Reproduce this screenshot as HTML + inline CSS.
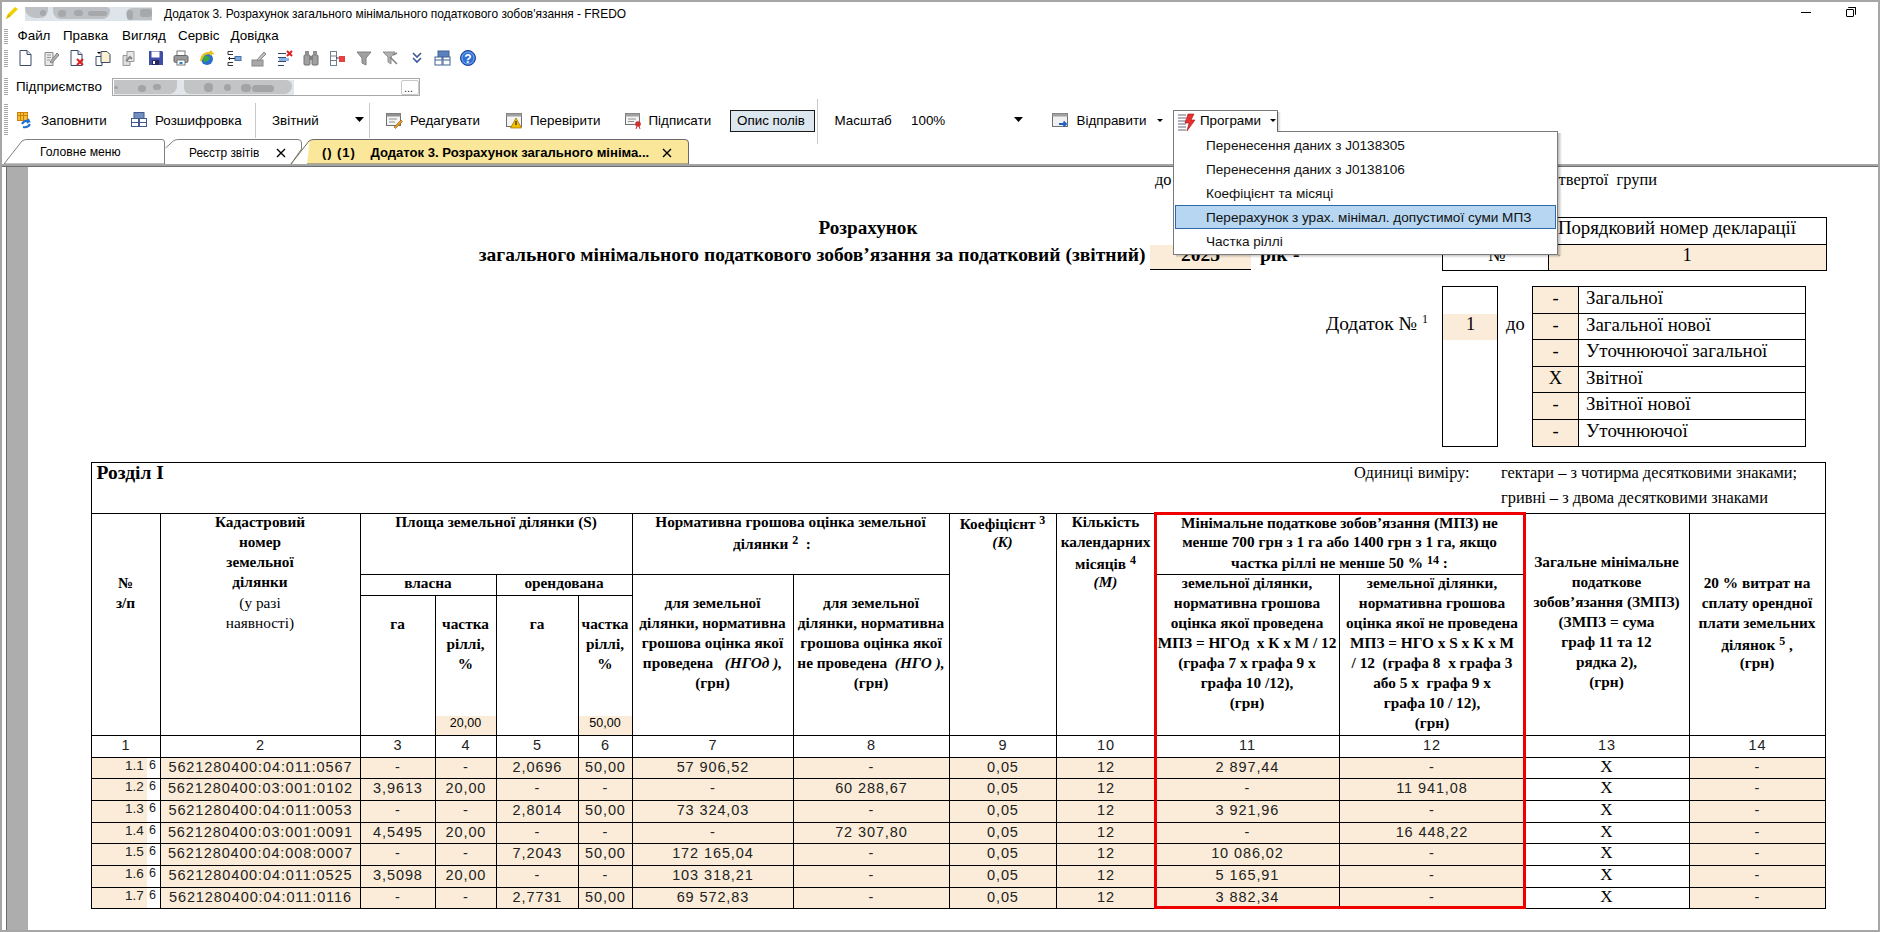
<!DOCTYPE html><html><head><meta charset="utf-8"><style>
html,body{margin:0;padding:0;}
body{width:1880px;height:932px;position:relative;overflow:hidden;background:#fff;}
.t{position:absolute;white-space:pre;line-height:normal;}
.r{position:absolute;}
svg{position:absolute;}
</style></head><body>
<svg style="left:4px;top:5px" width="16" height="16" viewBox="0 0 16 16"><path d="M2 14 L4 9 L11 2 L14 4 L7 11 Z" fill="#f2d000"/><path d="M2 14 L4 9 L7 11 Z" fill="#d8b800"/></svg><div class="r" style="left:25px;top:7px;width:127px;height:14px;background:#dde4ea;"></div><div class="r" style="left:25px;top:7px;width:23px;height:11px;background:#bdc1c5;border-radius:0 0 8px 10px;filter:blur(0.6px);"></div><div class="r" style="left:53px;top:7px;width:57px;height:12px;background:#bdc1c5;border-radius:0 4px 8px 8px;filter:blur(0.6px);"></div><div class="r" style="left:126px;top:8px;width:26px;height:12px;background:#bdc1c5;border-radius:6px 0 0 6px;filter:blur(0.6px);"></div><div class="r" style="left:40px;top:10px;width:6px;height:6px;background:#a6a8aa;border-radius:3px;filter:blur(0.5px);"></div><div class="r" style="left:58px;top:10px;width:8px;height:7px;background:#a6a8aa;border-radius:3px;filter:blur(0.5px);"></div><div class="r" style="left:74px;top:10px;width:9px;height:6px;background:#a6a8aa;border-radius:3px;filter:blur(0.5px);"></div><div class="r" style="left:88px;top:11px;width:19px;height:5px;background:#a6a8aa;border-radius:3px;filter:blur(0.5px);"></div><div class="r" style="left:127px;top:10px;width:6px;height:10px;background:#a6a8aa;border-radius:3px;filter:blur(0.5px);"></div><div class="r" style="left:140px;top:9px;width:12px;height:8px;background:#a6a8aa;border-radius:3px;filter:blur(0.5px);"></div><div class="t" style="left:164px;top:7.19px;font-family:'Liberation Sans';font-size:11.95px;font-weight:normal;font-style:normal;color:#000;">Додаток 3. Розрахунок загального мінімального податкового зобов&#x27;язання - FREDO</div><div class="r" style="left:1801px;top:12px;width:10px;height:1px;background:#000;"></div><div class="r" style="left:1846px;top:9px;width:8px;height:8px;border:1.5px solid #000;box-sizing:border-box;border-radius:1px;"></div><div class="r" style="left:1848px;top:7px;width:8px;height:8px;border-top:1.5px solid #000;border-right:1.5px solid #000;box-sizing:border-box;border-radius:1px;"></div><div class="r" style="left:4px;top:29px;width:4px;height:1px;background:#a8a8a8;"></div><div class="r" style="left:4px;top:31px;width:4px;height:1px;background:#a8a8a8;"></div><div class="r" style="left:4px;top:33px;width:4px;height:1px;background:#a8a8a8;"></div><div class="r" style="left:4px;top:35px;width:4px;height:1px;background:#a8a8a8;"></div><div class="r" style="left:4px;top:37px;width:4px;height:1px;background:#a8a8a8;"></div><div class="r" style="left:4px;top:39px;width:4px;height:1px;background:#a8a8a8;"></div><div class="r" style="left:4px;top:41px;width:4px;height:1px;background:#a8a8a8;"></div><div class="r" style="left:4px;top:43px;width:4px;height:1px;background:#a8a8a8;"></div><div class="t" style="left:17.5px;top:27.87px;font-family:'Liberation Sans';font-size:13.4px;font-weight:normal;font-style:normal;color:#000;">Файл</div><div class="t" style="left:63px;top:27.87px;font-family:'Liberation Sans';font-size:13.4px;font-weight:normal;font-style:normal;color:#000;">Правка</div><div class="t" style="left:122px;top:27.87px;font-family:'Liberation Sans';font-size:13.4px;font-weight:normal;font-style:normal;color:#000;">Вигляд</div><div class="t" style="left:178px;top:27.87px;font-family:'Liberation Sans';font-size:13.4px;font-weight:normal;font-style:normal;color:#000;">Сервіс</div><div class="t" style="left:230.5px;top:27.87px;font-family:'Liberation Sans';font-size:13.4px;font-weight:normal;font-style:normal;color:#000;">Довідка</div><div class="r" style="left:4px;top:50px;width:4px;height:1px;background:#a8a8a8;"></div><div class="r" style="left:4px;top:52px;width:4px;height:1px;background:#a8a8a8;"></div><div class="r" style="left:4px;top:54px;width:4px;height:1px;background:#a8a8a8;"></div><div class="r" style="left:4px;top:56px;width:4px;height:1px;background:#a8a8a8;"></div><div class="r" style="left:4px;top:58px;width:4px;height:1px;background:#a8a8a8;"></div><div class="r" style="left:4px;top:60px;width:4px;height:1px;background:#a8a8a8;"></div><div class="r" style="left:4px;top:62px;width:4px;height:1px;background:#a8a8a8;"></div><div class="r" style="left:4px;top:64px;width:4px;height:1px;background:#a8a8a8;"></div><div class="r" style="left:4px;top:66px;width:4px;height:1px;background:#a8a8a8;"></div><svg style="left:17px;top:49px" width="18" height="18" viewBox="0 0 18 18"><path d="M3 1.5 H10 L14 5.5 V16.5 H3 Z" fill="#fff" stroke="#3a4a6a" stroke-width="1"/><path d="M10 1.5 V5.5 H14" fill="#dde" stroke="#3a4a6a"/></svg><svg style="left:42px;top:49px" width="18" height="18" viewBox="0 0 18 18"><path d="M3 3.5 H11 V16.5 H3 Z" fill="#e8e8e8" stroke="#8a8a8a"/><path d="M5 6 H9 M5 8.5 H9 M5 11 H8" stroke="#999"/><path d="M8 13 L15 4 L17 6 L10 14 Z" fill="#b0b0b0" stroke="#808080"/></svg><svg style="left:68px;top:49px" width="18" height="18" viewBox="0 0 18 18"><path d="M3 1.5 H10 L14 5.5 V16.5 H3 Z" fill="#fff" stroke="#3a4a6a" stroke-width="1"/><path d="M10 1.5 V5.5 H14" fill="#dde" stroke="#3a4a6a"/><path d="M9 10 L15 16 M15 10 L9 16" stroke="#e02020" stroke-width="2"/></svg><svg style="left:94px;top:49px" width="18" height="18" viewBox="0 0 18 18"><path d="M2 7.5 H8 V16.5 H2 Z" fill="#fff" stroke="#3a4a6a"/><path d="M7 2.5 H13 L16 5.5 V13.5 H7 Z" fill="#fbf0d0" stroke="#3a4a6a"/><path d="M3 3 L5 5 L7 3Z" fill="#000"/></svg><svg style="left:120px;top:49px" width="18" height="18" viewBox="0 0 18 18"><path d="M3 6.5 H10 V16.5 H3 Z" fill="#ddd" stroke="#999"/><path d="M7 2.5 H14 V12.5 H7 Z" fill="#e8e8e8" stroke="#999"/><path d="M6 12 L10 8 L12 10" stroke="#888" stroke-width="2" fill="none"/></svg><svg style="left:147px;top:49px" width="18" height="18" viewBox="0 0 18 18"><path d="M2 2 H15 L16 3 V16 H2 Z" fill="#3f4fa8"/><rect x="4.5" y="2.5" width="8" height="6" fill="#fff"/><rect x="5" y="11" width="7" height="5" fill="#2a2a60"/><rect x="6" y="12" width="2" height="3" fill="#fff"/></svg><svg style="left:172px;top:49px" width="18" height="18" viewBox="0 0 18 18"><rect x="5" y="2" width="8" height="5" fill="#fff" stroke="#777"/><rect x="2" y="6.5" width="14" height="7" rx="1.5" fill="#9a9a9a" stroke="#666"/><rect x="5" y="11" width="8" height="5" fill="#fff" stroke="#777"/><rect x="7.5" y="13" width="3" height="2" fill="#1e80d0"/></svg><svg style="left:198px;top:49px" width="18" height="18" viewBox="0 0 18 18"><circle cx="9" cy="10" r="6" fill="#2a6fd0"/><path d="M5 8 Q9 5 12 9 Q10 13 6 13Z" fill="#3aaa40"/><path d="M3 12 Q4 3 14 4 L12 2 M14 4 L12 6" stroke="#e8c020" stroke-width="2.2" fill="none"/></svg><svg style="left:224px;top:49px" width="18" height="18" viewBox="0 0 18 18"><path d="M9 2.5 H4 V5.5 H9 M9 13.5 H4 V16.5 H9" stroke="#333" fill="none"/><rect x="11" y="7.5" width="6" height="4" fill="#7aa8e0" stroke="#4a70a0"/><path d="M5 9.5 H11 M6 8 L4.5 9.5 L6 11" stroke="#222" fill="none"/></svg><svg style="left:250px;top:49px" width="18" height="18" viewBox="0 0 18 18"><rect x="2" y="11" width="11" height="6" fill="#a8a8a8" stroke="#888"/><path d="M7 11 L14 3 L16 5 L9 12 Z" fill="#c0c0c0" stroke="#888"/></svg><svg style="left:276px;top:49px" width="18" height="18" viewBox="0 0 18 18"><path d="M2 4.5 H10 M2 8.5 H10 M2 12.5 H10 M2 16.5 H8" stroke="#34486a" fill="none"/><rect x="3" y="9" width="10" height="3" fill="#8ab4e8"/><path d="M11 2 L16 7 M16 2 L11 7" stroke="#e02020" stroke-width="2"/></svg><svg style="left:302px;top:49px" width="18" height="18" viewBox="0 0 18 18"><rect x="2" y="6" width="6" height="10" rx="1" fill="#a0a0a0" stroke="#707070"/><rect x="10" y="6" width="6" height="10" rx="1" fill="#a0a0a0" stroke="#707070"/><rect x="3" y="2" width="4" height="5" fill="#909090"/><rect x="11" y="2" width="4" height="5" fill="#909090"/><rect x="7" y="7" width="4" height="4" fill="#808080"/></svg><svg style="left:328px;top:49px" width="18" height="18" viewBox="0 0 18 18"><rect x="2.5" y="2.5" width="6" height="14" fill="#fff" stroke="#708090"/><path d="M2.5 7 H8.5 M2.5 11.5 H8.5" stroke="#708090"/><rect x="11" y="7" width="6" height="6" fill="#e84040"/><path d="M8 9 L11 9" stroke="#335" /></svg><svg style="left:355px;top:49px" width="18" height="18" viewBox="0 0 18 18"><path d="M2 3 H16 L11 9 V16 L7 14 V9 Z" fill="#a0a0a0" stroke="#808080"/></svg><svg style="left:381px;top:49px" width="18" height="18" viewBox="0 0 18 18"><path d="M2 3 H14 L10 8 V15 L7 13 V8 Z" fill="#b0b0b0" stroke="#909090"/><path d="M9 8 L16 15 M12 6 L16 4" stroke="#808080" stroke-width="1.5"/></svg><svg style="left:408px;top:49px" width="18" height="18" viewBox="0 0 18 18"><path d="M5 4 L9 8 L13 4 M5 9 L9 13 L13 9" stroke="#3a5a9a" stroke-width="1.6" fill="none"/></svg><svg style="left:433px;top:49px" width="18" height="18" viewBox="0 0 18 18"><rect x="5" y="2" width="11" height="7" fill="#5a80c0" stroke="#406090"/><rect x="2" y="8" width="7" height="8" fill="#fff" stroke="#406090"/><rect x="10" y="8" width="7" height="8" fill="#fff" stroke="#406090"/><path d="M2 11 H9 M10 11 H17" stroke="#406090"/></svg><svg style="left:459px;top:49px" width="18" height="18" viewBox="0 0 18 18"><circle cx="9" cy="9" r="7.5" fill="#2f6fd8" stroke="#1a3f90"/><circle cx="9" cy="9" r="6" fill="none" stroke="#8ab8f0" stroke-width="0.8"/><text x="9" y="13.5" font-family="Liberation Sans" font-size="12" font-weight="bold" fill="#fff" text-anchor="middle">?</text></svg><div class="r" style="left:4px;top:78px;width:4px;height:1px;background:#a8a8a8;"></div><div class="r" style="left:4px;top:80px;width:4px;height:1px;background:#a8a8a8;"></div><div class="r" style="left:4px;top:82px;width:4px;height:1px;background:#a8a8a8;"></div><div class="r" style="left:4px;top:84px;width:4px;height:1px;background:#a8a8a8;"></div><div class="r" style="left:4px;top:86px;width:4px;height:1px;background:#a8a8a8;"></div><div class="r" style="left:4px;top:88px;width:4px;height:1px;background:#a8a8a8;"></div><div class="r" style="left:4px;top:90px;width:4px;height:1px;background:#a8a8a8;"></div><div class="r" style="left:4px;top:92px;width:4px;height:1px;background:#a8a8a8;"></div><div class="r" style="left:4px;top:94px;width:4px;height:1px;background:#a8a8a8;"></div><div class="t" style="left:16px;top:78.87px;font-family:'Liberation Sans';font-size:13.4px;font-weight:normal;font-style:normal;color:#000;">Підприємство</div><div class="r" style="left:112px;top:78px;width:308px;height:18px;background:#fff;border:1px solid #a8a8a8;box-sizing:border-box;"></div><div class="r" style="left:114px;top:80px;width:180px;height:15px;background:#e2e6ea;"></div><div class="r" style="left:114px;top:80px;width:63px;height:14px;background:#c2c4c6;border-radius:0 0 8px 0;filter:blur(0.6px);"></div><div class="r" style="left:184px;top:80px;width:108px;height:14px;background:#c2c4c6;border-radius:0 6px 8px 6px;filter:blur(0.6px);"></div><div class="r" style="left:114px;top:86px;width:4px;height:3px;background:#a2a4a6;border-radius:4px;filter:blur(0.5px);"></div><div class="r" style="left:138px;top:85px;width:8px;height:7px;background:#a2a4a6;border-radius:4px;filter:blur(0.5px);"></div><div class="r" style="left:153px;top:84px;width:8px;height:6px;background:#a2a4a6;border-radius:4px;filter:blur(0.5px);"></div><div class="r" style="left:204px;top:83px;width:9px;height:9px;background:#a2a4a6;border-radius:4px;filter:blur(0.5px);"></div><div class="r" style="left:224px;top:84px;width:7px;height:7px;background:#a2a4a6;border-radius:4px;filter:blur(0.5px);"></div><div class="r" style="left:241px;top:84px;width:10px;height:8px;background:#a2a4a6;border-radius:4px;filter:blur(0.5px);"></div><div class="r" style="left:252px;top:85px;width:22px;height:7px;background:#a2a4a6;border-radius:4px;filter:blur(0.5px);"></div><div class="r" style="left:401px;top:80px;width:18px;height:15px;border:1px solid #c8c8c8;box-sizing:border-box;border-radius:2px;"></div><div class="t" style="left:404px;top:82.05px;font-family:'Liberation Sans';font-size:11px;font-weight:normal;font-style:normal;color:#222;">...</div><div class="r" style="left:4px;top:104px;width:4px;height:1px;background:#a8a8a8;"></div><div class="r" style="left:4px;top:106px;width:4px;height:1px;background:#a8a8a8;"></div><div class="r" style="left:4px;top:108px;width:4px;height:1px;background:#a8a8a8;"></div><div class="r" style="left:4px;top:110px;width:4px;height:1px;background:#a8a8a8;"></div><div class="r" style="left:4px;top:112px;width:4px;height:1px;background:#a8a8a8;"></div><div class="r" style="left:4px;top:114px;width:4px;height:1px;background:#a8a8a8;"></div><div class="r" style="left:4px;top:116px;width:4px;height:1px;background:#a8a8a8;"></div><div class="r" style="left:4px;top:118px;width:4px;height:1px;background:#a8a8a8;"></div><div class="r" style="left:4px;top:120px;width:4px;height:1px;background:#a8a8a8;"></div><div class="r" style="left:4px;top:122px;width:4px;height:1px;background:#a8a8a8;"></div><div class="r" style="left:4px;top:124px;width:4px;height:1px;background:#a8a8a8;"></div><div class="r" style="left:4px;top:126px;width:4px;height:1px;background:#a8a8a8;"></div><div class="r" style="left:4px;top:128px;width:4px;height:1px;background:#a8a8a8;"></div><div class="r" style="left:4px;top:130px;width:4px;height:1px;background:#a8a8a8;"></div><div class="r" style="left:4px;top:132px;width:4px;height:1px;background:#a8a8a8;"></div><div class="r" style="left:4px;top:134px;width:4px;height:1px;background:#a8a8a8;"></div><div class="r" style="left:255px;top:103px;width:1px;height:35px;background:#c8c8c8;"></div><div class="r" style="left:369px;top:103px;width:1px;height:35px;background:#c8c8c8;"></div><div class="r" style="left:817px;top:99px;width:1px;height:45px;background:#c8c8c8;"></div><svg style="left:16px;top:111px" width="18" height="18" viewBox="0 0 18 18"><rect x="1.5" y="1.5" width="10" height="8" fill="#f0c040" stroke="#d08000"/><path d="M1.5 4.5 H11.5 M4.5 1.5 V9.5 M7.5 1.5 V9.5" stroke="#d08000"/><path d="M6 13 Q8 9 13 10 L12 8 M13 10 L11 12" stroke="#2070d0" stroke-width="2" fill="none"/><path d="M14 13 Q12 17 7 16" stroke="#2070d0" stroke-width="2" fill="none"/></svg><div class="t" style="left:41px;top:113.37px;font-family:'Liberation Sans';font-size:13.4px;font-weight:normal;font-style:normal;color:#000;">Заповнити</div><svg style="left:130px;top:111px" width="18" height="18" viewBox="0 0 18 18"><rect x="4" y="1.5" width="10" height="6" fill="#7090c0" stroke="#405a90"/><rect x="1.5" y="7.5" width="7" height="8" fill="#fff" stroke="#405a90"/><rect x="9.5" y="7.5" width="7" height="8" fill="#fff" stroke="#405a90"/><path d="M1.5 11.5 H8.5 M9.5 11.5 H16.5" stroke="#405a90"/></svg><div class="t" style="left:155px;top:113.37px;font-family:'Liberation Sans';font-size:13.4px;font-weight:normal;font-style:normal;color:#000;">Розшифровка</div><div class="t" style="left:272px;top:113.37px;font-family:'Liberation Sans';font-size:13.4px;font-weight:normal;font-style:normal;color:#000;">Звітний</div><svg style="left:355px;top:117px" width="9" height="6"><path d="M0 0 H9 L4.5 5 Z" fill="#000"/></svg><svg style="left:385px;top:111px" width="18" height="18" viewBox="0 0 18 18"><rect x="1.5" y="2.5" width="14" height="12" fill="#f4f4f4" stroke="#707070"/><rect x="1.5" y="2.5" width="14" height="3" fill="#909090"/><path d="M4 8 H12 M4 11 H10" stroke="#909090"/><path d="M9 16 L16 9 L17.5 10.5 L10.5 17.5 Z" fill="#e0a020" stroke="#905010" stroke-width="0.6"/></svg><div class="t" style="left:410px;top:113.37px;font-family:'Liberation Sans';font-size:13.4px;font-weight:normal;font-style:normal;color:#000;">Редагувати</div><svg style="left:505px;top:111px" width="18" height="18" viewBox="0 0 18 18"><rect x="1.5" y="2.5" width="15" height="13" fill="#f4f4f4" stroke="#707070"/><rect x="1.5" y="2.5" width="15" height="3" fill="#a0a0a0"/><path d="M11 7 L16.5 17 H5.5 Z" fill="#f0c000" stroke="#a07000" stroke-width="0.7"/><path d="M11 10 V14" stroke="#000"/></svg><div class="t" style="left:530px;top:113.37px;font-family:'Liberation Sans';font-size:13.4px;font-weight:normal;font-style:normal;color:#000;">Перевірити</div><svg style="left:624px;top:111px" width="18" height="18" viewBox="0 0 18 18"><rect x="1.5" y="2.5" width="14" height="11" fill="#f4f4f4" stroke="#707070"/><rect x="1.5" y="2.5" width="14" height="3" fill="#a0a0a0"/><path d="M4 8 H12 M4 10.5 H10" stroke="#909090"/><circle cx="14" cy="13" r="2.8" fill="#d03030"/><path d="M13 15 L12 18 M15 15 L16 18" stroke="#d03030"/></svg><div class="t" style="left:648.5px;top:113.37px;font-family:'Liberation Sans';font-size:13.4px;font-weight:normal;font-style:normal;color:#000;">Підписати</div><div class="r" style="left:730px;top:110px;width:85px;height:22px;background:#dce6ee;border:1px solid #1a1a1a;box-sizing:border-box;"></div><div class="t" style="left:737px;top:113.37px;font-family:'Liberation Sans';font-size:13.4px;font-weight:normal;font-style:normal;color:#000;">Опис полів</div><div class="t" style="left:834.5px;top:113.37px;font-family:'Liberation Sans';font-size:13.4px;font-weight:normal;font-style:normal;color:#000;">Масштаб</div><div class="t" style="left:911px;top:113.37px;font-family:'Liberation Sans';font-size:13.4px;font-weight:normal;font-style:normal;color:#000;">100%</div><svg style="left:1014px;top:117px" width="9" height="6"><path d="M0 0 H9 L4.5 5 Z" fill="#000"/></svg><svg style="left:1051px;top:111px" width="18" height="18" viewBox="0 0 18 18"><rect x="1.5" y="2.5" width="15" height="13" fill="#f0f0f0" stroke="#707070"/><rect x="1.5" y="2.5" width="15" height="3" fill="#a0a0a0"/><path d="M8 13 H15 M12.5 10.5 L15 13 L12.5 15.5" stroke="#2060c0" stroke-width="1.8" fill="none"/></svg><div class="t" style="left:1076.5px;top:113.37px;font-family:'Liberation Sans';font-size:13.4px;font-weight:normal;font-style:normal;color:#000;">Відправити</div><svg style="left:1157px;top:119px" width="6" height="4"><path d="M0 0 H6 L3 3 Z" fill="#000"/></svg><svg style="left:0;top:136px" width="700" height="32" viewBox="0 0 700 32">
<path d="M4 28 L22 5 Q24 3.5 27 3.5 H162 Q164.5 3.5 164.5 6 V28 Z" fill="#fff" stroke="#808080" stroke-width="1"/>
<path d="M165.5 12 L174 4.5 Q176 3.5 179 3.5 H298 Q301.5 3.5 301.5 7 V13 L291 28" fill="#fff" stroke="#808080" stroke-width="1"/>
<path d="M291 28 L309 5 Q311 3.5 314 3.5 H685 Q688.5 3.5 688.5 7 V28 Z" fill="#fbe799" stroke="#6a6a6a" stroke-width="1"/>
<path d="M292 28 L309.5 5.5 L307 28 Z" fill="#fff"/>
</svg><div class="t" style="left:40px;top:145.46px;font-family:'Liberation Sans';font-size:12.2px;font-weight:normal;font-style:normal;color:#000;">Головне меню</div><div class="t" style="left:189px;top:145.73px;font-family:'Liberation Sans';font-size:11.9px;font-weight:normal;font-style:normal;color:#000;">Реєстр звітів</div><svg style="left:276px;top:148px" width="10" height="10"><path d="M1 1 L9 9 M9 1 L1 9" stroke="#000" stroke-width="1.4"/></svg><div class="t" style="left:322px;top:145.14px;font-family:'Liberation Sans';font-size:13.1px;font-weight:bold;font-style:normal;color:#000;letter-spacing:0.9px;">() (1)</div><div class="t" style="left:370.4px;top:145.14px;font-family:'Liberation Sans';font-size:13.1px;font-weight:bold;font-style:normal;color:#000;">Додаток 3. Розрахунок загального мініма...</div><svg style="left:662px;top:148px" width="10" height="10"><path d="M1 1 L9 9 M9 1 L1 9" stroke="#000" stroke-width="1.4"/></svg><div class="r" style="left:0px;top:164px;width:1878px;height:2px;background:#a4a4a4;"></div><div class="r" style="left:0px;top:166px;width:1878px;height:1px;background:#6e6e6e;"></div><div class="r" style="left:6px;top:167px;width:1px;height:763px;background:#6e6e6e;"></div><div class="r" style="left:7px;top:167px;width:21px;height:763px;background:#adadad;"></div><div class="t" style="left:1155px;top:169.89px;font-family:'Liberation Serif';font-size:16.4px;font-weight:normal;font-style:normal;color:#000;">до податкової декларації платника єдиного податку</div><div class="t" style="left:857px;width:800px;text-align:right;top:169.89px;font-family:'Liberation Serif';font-size:16.4px;font-weight:normal;font-style:normal;color:#000;">твертої  групи</div><div class="t" style="left:568.0px;width:600px;text-align:center;top:217.39px;font-family:'Liberation Serif';font-size:19.2px;font-weight:bold;font-style:normal;color:#000;">Розрахунок</div><div class="t" style="left:245.5px;width:900px;text-align:right;top:243.63px;font-family:'Liberation Serif';font-size:19.5px;font-weight:bold;font-style:normal;color:#000;">загального мінімального податкового зобов’язання за податковий (звітний)</div><div class="r" style="left:1150px;top:245px;width:101px;height:25px;background:#faecd8;"></div><div class="r" style="left:1150px;top:269px;width:101px;height:1px;background:#000;"></div><div class="t" style="left:900.5px;width:600px;text-align:center;top:243.63px;font-family:'Liberation Serif';font-size:19.5px;font-weight:bold;font-style:normal;color:#000;">2025</div><div class="t" style="left:1260px;top:243.63px;font-family:'Liberation Serif';font-size:19.5px;font-weight:bold;font-style:normal;color:#000;">рік</div><div class="t" style="left:1293px;top:243.63px;font-family:'Liberation Serif';font-size:19.5px;font-weight:bold;font-style:normal;color:#000;">-</div><div class="r" style="left:1548px;top:244px;width:278px;height:26px;background:#faecd8;"></div><div class="r" style="left:1442px;top:217px;width:385px;height:1px;background:#000;"></div><div class="r" style="left:1442px;top:244px;width:385px;height:1px;background:#000;"></div><div class="r" style="left:1442px;top:270px;width:385px;height:1px;background:#000;"></div><div class="r" style="left:1442px;top:217px;width:1px;height:54px;background:#000;"></div><div class="r" style="left:1826px;top:217px;width:1px;height:54px;background:#000;"></div><div class="r" style="left:1548px;top:244px;width:1px;height:27px;background:#000;"></div><div class="t" style="left:996px;width:800px;text-align:right;top:217.05px;font-family:'Liberation Serif';font-size:18.8px;font-weight:normal;font-style:normal;color:#000;">Порядковий номер декларації</div><div class="t" style="left:1196.5px;width:600px;text-align:center;top:244.96px;font-family:'Liberation Serif';font-size:18px;font-weight:normal;font-style:normal;color:#000;">№</div><div class="t" style="left:1387.0px;width:600px;text-align:center;top:244.52px;font-family:'Liberation Serif';font-size:18.5px;font-weight:normal;font-style:normal;color:#000;">1</div><div class="t" style="left:617px;width:800px;text-align:right;top:312.71px;font-family:'Liberation Serif';font-size:19.4px;font-weight:normal;font-style:normal;color:#000;">Додаток №</div><div class="t" style="left:1422px;top:312.31px;font-family:'Liberation Serif';font-size:12px;font-weight:normal;font-style:normal;color:#000;">1</div><div class="r" style="left:1443px;top:314px;width:54px;height:26px;background:#faecd8;"></div><div class="r" style="left:1442px;top:286px;width:56px;height:1px;background:#000;"></div><div class="r" style="left:1442px;top:446px;width:56px;height:1px;background:#000;"></div><div class="r" style="left:1442px;top:286px;width:1px;height:161px;background:#000;"></div><div class="r" style="left:1497px;top:286px;width:1px;height:161px;background:#000;"></div><div class="t" style="left:1170.5px;width:600px;text-align:center;top:313.52px;font-family:'Liberation Serif';font-size:18.5px;font-weight:normal;font-style:normal;color:#000;">1</div><div class="t" style="left:1506px;top:313.52px;font-family:'Liberation Serif';font-size:18.5px;font-weight:normal;font-style:normal;color:#000;">до</div><div class="r" style="left:1533px;top:287px;width:45px;height:159px;background:#faecd8;"></div><div class="r" style="left:1532px;top:286px;width:274px;height:1px;background:#000;"></div><div class="r" style="left:1532px;top:313px;width:274px;height:1px;background:#000;"></div><div class="r" style="left:1532px;top:339px;width:274px;height:1px;background:#000;"></div><div class="r" style="left:1532px;top:366px;width:274px;height:1px;background:#000;"></div><div class="r" style="left:1532px;top:392px;width:274px;height:1px;background:#000;"></div><div class="r" style="left:1532px;top:419px;width:274px;height:1px;background:#000;"></div><div class="r" style="left:1532px;top:446px;width:274px;height:1px;background:#000;"></div><div class="r" style="left:1532px;top:286px;width:1px;height:161px;background:#000;"></div><div class="r" style="left:1578px;top:286px;width:1px;height:161px;background:#000;"></div><div class="r" style="left:1805px;top:286px;width:1px;height:161px;background:#000;"></div><div class="t" style="left:1255.5px;width:600px;text-align:center;top:287.52px;font-family:'Liberation Serif';font-size:18.5px;font-weight:normal;font-style:normal;color:#000;">-</div><div class="t" style="left:1586px;top:287.16px;font-family:'Liberation Serif';font-size:18.9px;font-weight:normal;font-style:normal;color:#000;">Загальної</div><div class="t" style="left:1255.5px;width:600px;text-align:center;top:314.52px;font-family:'Liberation Serif';font-size:18.5px;font-weight:normal;font-style:normal;color:#000;">-</div><div class="t" style="left:1586px;top:314.16px;font-family:'Liberation Serif';font-size:18.9px;font-weight:normal;font-style:normal;color:#000;">Загальної нової</div><div class="t" style="left:1255.5px;width:600px;text-align:center;top:340.52px;font-family:'Liberation Serif';font-size:18.5px;font-weight:normal;font-style:normal;color:#000;">-</div><div class="t" style="left:1586px;top:340.16px;font-family:'Liberation Serif';font-size:18.9px;font-weight:normal;font-style:normal;color:#000;">Уточнюючої загальної</div><div class="t" style="left:1255.5px;width:600px;text-align:center;top:367.52px;font-family:'Liberation Serif';font-size:18.5px;font-weight:normal;font-style:normal;color:#000;">X</div><div class="t" style="left:1586px;top:367.16px;font-family:'Liberation Serif';font-size:18.9px;font-weight:normal;font-style:normal;color:#000;">Звітної</div><div class="t" style="left:1255.5px;width:600px;text-align:center;top:393.52px;font-family:'Liberation Serif';font-size:18.5px;font-weight:normal;font-style:normal;color:#000;">-</div><div class="t" style="left:1586px;top:393.16px;font-family:'Liberation Serif';font-size:18.9px;font-weight:normal;font-style:normal;color:#000;">Звітної нової</div><div class="t" style="left:1255.5px;width:600px;text-align:center;top:420.52px;font-family:'Liberation Serif';font-size:18.5px;font-weight:normal;font-style:normal;color:#000;">-</div><div class="t" style="left:1586px;top:420.16px;font-family:'Liberation Serif';font-size:18.9px;font-weight:normal;font-style:normal;color:#000;">Уточнюючої</div><div class="r" style="left:92px;top:758px;width:55px;height:20px;background:#faecd8;"></div><div class="r" style="left:161px;top:758px;width:199px;height:20px;background:#faecd8;"></div><div class="r" style="left:361px;top:758px;width:74px;height:20px;background:#faecd8;"></div><div class="r" style="left:436px;top:758px;width:60px;height:20px;background:#faecd8;"></div><div class="r" style="left:497px;top:758px;width:81px;height:20px;background:#faecd8;"></div><div class="r" style="left:579px;top:758px;width:53px;height:20px;background:#faecd8;"></div><div class="r" style="left:633px;top:758px;width:160px;height:20px;background:#faecd8;"></div><div class="r" style="left:794px;top:758px;width:155px;height:20px;background:#faecd8;"></div><div class="r" style="left:950px;top:758px;width:106px;height:20px;background:#faecd8;"></div><div class="r" style="left:1057px;top:758px;width:98px;height:20px;background:#faecd8;"></div><div class="r" style="left:1156px;top:758px;width:183px;height:20px;background:#faecd8;"></div><div class="r" style="left:1340px;top:758px;width:184px;height:20px;background:#faecd8;"></div><div class="r" style="left:1690px;top:758px;width:135px;height:20px;background:#faecd8;"></div><div class="r" style="left:92px;top:779px;width:55px;height:21px;background:#faecd8;"></div><div class="r" style="left:161px;top:779px;width:199px;height:21px;background:#faecd8;"></div><div class="r" style="left:361px;top:779px;width:74px;height:21px;background:#faecd8;"></div><div class="r" style="left:436px;top:779px;width:60px;height:21px;background:#faecd8;"></div><div class="r" style="left:497px;top:779px;width:81px;height:21px;background:#faecd8;"></div><div class="r" style="left:579px;top:779px;width:53px;height:21px;background:#faecd8;"></div><div class="r" style="left:633px;top:779px;width:160px;height:21px;background:#faecd8;"></div><div class="r" style="left:794px;top:779px;width:155px;height:21px;background:#faecd8;"></div><div class="r" style="left:950px;top:779px;width:106px;height:21px;background:#faecd8;"></div><div class="r" style="left:1057px;top:779px;width:98px;height:21px;background:#faecd8;"></div><div class="r" style="left:1156px;top:779px;width:183px;height:21px;background:#faecd8;"></div><div class="r" style="left:1340px;top:779px;width:184px;height:21px;background:#faecd8;"></div><div class="r" style="left:1690px;top:779px;width:135px;height:21px;background:#faecd8;"></div><div class="r" style="left:92px;top:801px;width:55px;height:21px;background:#faecd8;"></div><div class="r" style="left:161px;top:801px;width:199px;height:21px;background:#faecd8;"></div><div class="r" style="left:361px;top:801px;width:74px;height:21px;background:#faecd8;"></div><div class="r" style="left:436px;top:801px;width:60px;height:21px;background:#faecd8;"></div><div class="r" style="left:497px;top:801px;width:81px;height:21px;background:#faecd8;"></div><div class="r" style="left:579px;top:801px;width:53px;height:21px;background:#faecd8;"></div><div class="r" style="left:633px;top:801px;width:160px;height:21px;background:#faecd8;"></div><div class="r" style="left:794px;top:801px;width:155px;height:21px;background:#faecd8;"></div><div class="r" style="left:950px;top:801px;width:106px;height:21px;background:#faecd8;"></div><div class="r" style="left:1057px;top:801px;width:98px;height:21px;background:#faecd8;"></div><div class="r" style="left:1156px;top:801px;width:183px;height:21px;background:#faecd8;"></div><div class="r" style="left:1340px;top:801px;width:184px;height:21px;background:#faecd8;"></div><div class="r" style="left:1690px;top:801px;width:135px;height:21px;background:#faecd8;"></div><div class="r" style="left:92px;top:823px;width:55px;height:20px;background:#faecd8;"></div><div class="r" style="left:161px;top:823px;width:199px;height:20px;background:#faecd8;"></div><div class="r" style="left:361px;top:823px;width:74px;height:20px;background:#faecd8;"></div><div class="r" style="left:436px;top:823px;width:60px;height:20px;background:#faecd8;"></div><div class="r" style="left:497px;top:823px;width:81px;height:20px;background:#faecd8;"></div><div class="r" style="left:579px;top:823px;width:53px;height:20px;background:#faecd8;"></div><div class="r" style="left:633px;top:823px;width:160px;height:20px;background:#faecd8;"></div><div class="r" style="left:794px;top:823px;width:155px;height:20px;background:#faecd8;"></div><div class="r" style="left:950px;top:823px;width:106px;height:20px;background:#faecd8;"></div><div class="r" style="left:1057px;top:823px;width:98px;height:20px;background:#faecd8;"></div><div class="r" style="left:1156px;top:823px;width:183px;height:20px;background:#faecd8;"></div><div class="r" style="left:1340px;top:823px;width:184px;height:20px;background:#faecd8;"></div><div class="r" style="left:1690px;top:823px;width:135px;height:20px;background:#faecd8;"></div><div class="r" style="left:92px;top:844px;width:55px;height:21px;background:#faecd8;"></div><div class="r" style="left:161px;top:844px;width:199px;height:21px;background:#faecd8;"></div><div class="r" style="left:361px;top:844px;width:74px;height:21px;background:#faecd8;"></div><div class="r" style="left:436px;top:844px;width:60px;height:21px;background:#faecd8;"></div><div class="r" style="left:497px;top:844px;width:81px;height:21px;background:#faecd8;"></div><div class="r" style="left:579px;top:844px;width:53px;height:21px;background:#faecd8;"></div><div class="r" style="left:633px;top:844px;width:160px;height:21px;background:#faecd8;"></div><div class="r" style="left:794px;top:844px;width:155px;height:21px;background:#faecd8;"></div><div class="r" style="left:950px;top:844px;width:106px;height:21px;background:#faecd8;"></div><div class="r" style="left:1057px;top:844px;width:98px;height:21px;background:#faecd8;"></div><div class="r" style="left:1156px;top:844px;width:183px;height:21px;background:#faecd8;"></div><div class="r" style="left:1340px;top:844px;width:184px;height:21px;background:#faecd8;"></div><div class="r" style="left:1690px;top:844px;width:135px;height:21px;background:#faecd8;"></div><div class="r" style="left:92px;top:866px;width:55px;height:21px;background:#faecd8;"></div><div class="r" style="left:161px;top:866px;width:199px;height:21px;background:#faecd8;"></div><div class="r" style="left:361px;top:866px;width:74px;height:21px;background:#faecd8;"></div><div class="r" style="left:436px;top:866px;width:60px;height:21px;background:#faecd8;"></div><div class="r" style="left:497px;top:866px;width:81px;height:21px;background:#faecd8;"></div><div class="r" style="left:579px;top:866px;width:53px;height:21px;background:#faecd8;"></div><div class="r" style="left:633px;top:866px;width:160px;height:21px;background:#faecd8;"></div><div class="r" style="left:794px;top:866px;width:155px;height:21px;background:#faecd8;"></div><div class="r" style="left:950px;top:866px;width:106px;height:21px;background:#faecd8;"></div><div class="r" style="left:1057px;top:866px;width:98px;height:21px;background:#faecd8;"></div><div class="r" style="left:1156px;top:866px;width:183px;height:21px;background:#faecd8;"></div><div class="r" style="left:1340px;top:866px;width:184px;height:21px;background:#faecd8;"></div><div class="r" style="left:1690px;top:866px;width:135px;height:21px;background:#faecd8;"></div><div class="r" style="left:92px;top:888px;width:55px;height:20px;background:#faecd8;"></div><div class="r" style="left:161px;top:888px;width:199px;height:20px;background:#faecd8;"></div><div class="r" style="left:361px;top:888px;width:74px;height:20px;background:#faecd8;"></div><div class="r" style="left:436px;top:888px;width:60px;height:20px;background:#faecd8;"></div><div class="r" style="left:497px;top:888px;width:81px;height:20px;background:#faecd8;"></div><div class="r" style="left:579px;top:888px;width:53px;height:20px;background:#faecd8;"></div><div class="r" style="left:633px;top:888px;width:160px;height:20px;background:#faecd8;"></div><div class="r" style="left:794px;top:888px;width:155px;height:20px;background:#faecd8;"></div><div class="r" style="left:950px;top:888px;width:106px;height:20px;background:#faecd8;"></div><div class="r" style="left:1057px;top:888px;width:98px;height:20px;background:#faecd8;"></div><div class="r" style="left:1156px;top:888px;width:183px;height:20px;background:#faecd8;"></div><div class="r" style="left:1340px;top:888px;width:184px;height:20px;background:#faecd8;"></div><div class="r" style="left:1690px;top:888px;width:135px;height:20px;background:#faecd8;"></div><div class="r" style="left:436px;top:716px;width:60px;height:19px;background:#faecd8;"></div><div class="r" style="left:579px;top:716px;width:53px;height:19px;background:#faecd8;"></div><div class="r" style="left:91px;top:462px;width:1735px;height:1px;background:#000;"></div><div class="r" style="left:91px;top:462px;width:1px;height:447px;background:#000;"></div><div class="r" style="left:1825px;top:462px;width:1px;height:447px;background:#000;"></div><div class="r" style="left:91px;top:513px;width:1735px;height:1px;background:#000;"></div><div class="r" style="left:360px;top:574px;width:589px;height:1px;background:#000;"></div><div class="r" style="left:1155px;top:574px;width:369px;height:1px;background:#000;"></div><div class="r" style="left:360px;top:595px;width:272px;height:1px;background:#000;"></div><div class="r" style="left:91px;top:735px;width:1735px;height:1px;background:#000;"></div><div class="r" style="left:91px;top:757px;width:1735px;height:1px;background:#000;"></div><div class="r" style="left:91px;top:778px;width:1735px;height:1px;background:#000;"></div><div class="r" style="left:91px;top:800px;width:1735px;height:1px;background:#000;"></div><div class="r" style="left:91px;top:822px;width:1735px;height:1px;background:#000;"></div><div class="r" style="left:91px;top:843px;width:1735px;height:1px;background:#000;"></div><div class="r" style="left:91px;top:865px;width:1735px;height:1px;background:#000;"></div><div class="r" style="left:91px;top:887px;width:1735px;height:1px;background:#000;"></div><div class="r" style="left:91px;top:908px;width:1735px;height:1px;background:#000;"></div><div class="r" style="left:160px;top:513px;width:1px;height:396px;background:#000;"></div><div class="r" style="left:360px;top:513px;width:1px;height:396px;background:#000;"></div><div class="r" style="left:435px;top:595px;width:1px;height:314px;background:#000;"></div><div class="r" style="left:496px;top:574px;width:1px;height:335px;background:#000;"></div><div class="r" style="left:578px;top:595px;width:1px;height:314px;background:#000;"></div><div class="r" style="left:632px;top:513px;width:1px;height:396px;background:#000;"></div><div class="r" style="left:793px;top:574px;width:1px;height:335px;background:#000;"></div><div class="r" style="left:949px;top:513px;width:1px;height:396px;background:#000;"></div><div class="r" style="left:1056px;top:513px;width:1px;height:396px;background:#000;"></div><div class="r" style="left:1339px;top:574px;width:1px;height:335px;background:#000;"></div><div class="r" style="left:1689px;top:513px;width:1px;height:396px;background:#000;"></div><div class="r" style="left:1155px;top:513px;width:1px;height:396px;background:#000;"></div><div class="r" style="left:1524px;top:513px;width:1px;height:396px;background:#000;"></div><div class="t" style="left:96.5px;top:462.13px;font-family:'Liberation Serif';font-size:19.5px;font-weight:bold;font-style:normal;color:#000;">Розділ I</div><div class="t" style="left:1354px;top:462.69px;font-family:'Liberation Serif';font-size:16.4px;font-weight:normal;font-style:normal;color:#000;">Одиниці виміру:</div><div class="t" style="left:1501px;top:462.69px;font-family:'Liberation Serif';font-size:16.4px;font-weight:normal;font-style:normal;color:#000;">гектари – з чотирма десятковими знаками;</div><div class="t" style="left:1501px;top:487.99px;font-family:'Liberation Serif';font-size:16.4px;font-weight:normal;font-style:normal;color:#000;">гривні – з двома десятковими знаками</div><div class="t" style="left:-74.5px;width:400px;text-align:center;top:573.87px;font-family:'Liberation Serif';font-size:15.3px;font-weight:bold;font-style:normal;color:#000;">№</div><div class="t" style="left:-74.5px;width:400px;text-align:center;top:593.87px;font-family:'Liberation Serif';font-size:15.3px;font-weight:bold;font-style:normal;color:#000;">з/п</div><div class="t" style="left:60.0px;width:400px;text-align:center;top:513.37px;font-family:'Liberation Serif';font-size:15.3px;font-weight:bold;font-style:normal;color:#000;">Кадастровий</div><div class="t" style="left:60.0px;width:400px;text-align:center;top:533.37px;font-family:'Liberation Serif';font-size:15.3px;font-weight:bold;font-style:normal;color:#000;">номер</div><div class="t" style="left:60.0px;width:400px;text-align:center;top:553.37px;font-family:'Liberation Serif';font-size:15.3px;font-weight:bold;font-style:normal;color:#000;">земельної</div><div class="t" style="left:60.0px;width:400px;text-align:center;top:573.37px;font-family:'Liberation Serif';font-size:15.3px;font-weight:bold;font-style:normal;color:#000;">ділянки</div><div class="t" style="left:60.0px;width:400px;text-align:center;top:594.37px;font-family:'Liberation Serif';font-size:15.3px;font-weight:normal;font-style:normal;color:#000;">(у разі</div><div class="t" style="left:60.0px;width:400px;text-align:center;top:614.37px;font-family:'Liberation Serif';font-size:15.3px;font-weight:normal;font-style:normal;color:#000;">наявності)</div><div class="t" style="left:296.0px;width:400px;text-align:center;top:513.37px;font-family:'Liberation Serif';font-size:15.3px;font-weight:bold;font-style:normal;color:#000;">Площа земельної ділянки (S)</div><div class="t" style="left:228.0px;width:400px;text-align:center;top:573.87px;font-family:'Liberation Serif';font-size:15.3px;font-weight:bold;font-style:normal;color:#000;">власна</div><div class="t" style="left:364.0px;width:400px;text-align:center;top:573.87px;font-family:'Liberation Serif';font-size:15.3px;font-weight:bold;font-style:normal;color:#000;">орендована</div><div class="t" style="left:197.5px;width:400px;text-align:center;top:615.37px;font-family:'Liberation Serif';font-size:15.3px;font-weight:bold;font-style:normal;color:#000;">га</div><div class="t" style="left:265.5px;width:400px;text-align:center;top:615.37px;font-family:'Liberation Serif';font-size:15.3px;font-weight:bold;font-style:normal;color:#000;">частка</div><div class="t" style="left:265.5px;width:400px;text-align:center;top:635.37px;font-family:'Liberation Serif';font-size:15.3px;font-weight:bold;font-style:normal;color:#000;">ріллі,</div><div class="t" style="left:265.5px;width:400px;text-align:center;top:655.37px;font-family:'Liberation Serif';font-size:15.3px;font-weight:bold;font-style:normal;color:#000;">%</div><div class="t" style="left:337.0px;width:400px;text-align:center;top:615.37px;font-family:'Liberation Serif';font-size:15.3px;font-weight:bold;font-style:normal;color:#000;">га</div><div class="t" style="left:405.0px;width:400px;text-align:center;top:615.37px;font-family:'Liberation Serif';font-size:15.3px;font-weight:bold;font-style:normal;color:#000;">частка</div><div class="t" style="left:405.0px;width:400px;text-align:center;top:635.37px;font-family:'Liberation Serif';font-size:15.3px;font-weight:bold;font-style:normal;color:#000;">ріллі,</div><div class="t" style="left:405.0px;width:400px;text-align:center;top:655.37px;font-family:'Liberation Serif';font-size:15.3px;font-weight:bold;font-style:normal;color:#000;">%</div><div class="t" style="left:435.5px;width:60px;text-align:center;top:715.69px;font-family:'Liberation Sans';font-size:12.5px;font-weight:normal;font-style:normal;color:#000;">20,00</div><div class="t" style="left:575.0px;width:60px;text-align:center;top:715.69px;font-family:'Liberation Sans';font-size:12.5px;font-weight:normal;font-style:normal;color:#000;">50,00</div><div class="t" style="left:590.5px;width:400px;text-align:center;top:513.37px;font-family:'Liberation Serif';font-size:15.3px;font-weight:bold;font-style:normal;color:#000;">Нормативна грошова оцінка земельної</div><div class="t" style="left:572.0px;width:400px;text-align:center;top:533.37px;font-family:'Liberation Serif';font-size:15.3px;font-weight:bold;font-style:normal;color:#000;">ділянки <sup style="font-size:12px;font-weight:bold;vertical-align:5px">2</sup>  :</div><div class="t" style="left:512.5px;width:400px;text-align:center;top:594.37px;font-family:'Liberation Serif';font-size:15.3px;font-weight:bold;font-style:normal;color:#000;">для земельної</div><div class="t" style="left:512.5px;width:400px;text-align:center;top:614.37px;font-family:'Liberation Serif';font-size:15.3px;font-weight:bold;font-style:normal;color:#000;">ділянки, нормативна</div><div class="t" style="left:512.5px;width:400px;text-align:center;top:634.37px;font-family:'Liberation Serif';font-size:15.3px;font-weight:bold;font-style:normal;color:#000;">грошова оцінка якої</div><div class="t" style="left:512.5px;width:400px;text-align:center;top:654.37px;font-family:'Liberation Serif';font-size:15.3px;font-weight:bold;font-style:normal;color:#000;">проведена   <i>(НГОд ),</i></div><div class="t" style="left:512.5px;width:400px;text-align:center;top:674.37px;font-family:'Liberation Serif';font-size:15.3px;font-weight:bold;font-style:normal;color:#000;">(грн)</div><div class="t" style="left:671.0px;width:400px;text-align:center;top:594.37px;font-family:'Liberation Serif';font-size:15.3px;font-weight:bold;font-style:normal;color:#000;">для земельної</div><div class="t" style="left:671.0px;width:400px;text-align:center;top:614.37px;font-family:'Liberation Serif';font-size:15.3px;font-weight:bold;font-style:normal;color:#000;">ділянки, нормативна</div><div class="t" style="left:671.0px;width:400px;text-align:center;top:634.37px;font-family:'Liberation Serif';font-size:15.3px;font-weight:bold;font-style:normal;color:#000;">грошова оцінка якої</div><div class="t" style="left:671.0px;width:400px;text-align:center;top:654.37px;font-family:'Liberation Serif';font-size:15.3px;font-weight:bold;font-style:normal;color:#000;">не проведена  <i>(НГО ),</i></div><div class="t" style="left:671.0px;width:400px;text-align:center;top:674.37px;font-family:'Liberation Serif';font-size:15.3px;font-weight:bold;font-style:normal;color:#000;">(грн)</div><div class="t" style="left:802.5px;width:400px;text-align:center;top:513.37px;font-family:'Liberation Serif';font-size:15.3px;font-weight:bold;font-style:normal;color:#000;">Коефіцієнт <sup style="font-size:12px;font-weight:bold;vertical-align:5px">3</sup></div><div class="t" style="left:802.5px;width:400px;text-align:center;top:533.37px;font-family:'Liberation Serif';font-size:15.3px;font-weight:bold;font-style:normal;color:#000;"><i>(K)</i></div><div class="t" style="left:905.5px;width:400px;text-align:center;top:513.37px;font-family:'Liberation Serif';font-size:15.3px;font-weight:bold;font-style:normal;color:#000;">Кількість</div><div class="t" style="left:905.5px;width:400px;text-align:center;top:533.37px;font-family:'Liberation Serif';font-size:15.3px;font-weight:bold;font-style:normal;color:#000;">календарних</div><div class="t" style="left:905.5px;width:400px;text-align:center;top:553.37px;font-family:'Liberation Serif';font-size:15.3px;font-weight:bold;font-style:normal;color:#000;">місяців <sup style="font-size:12px;font-weight:bold;vertical-align:5px">4</sup></div><div class="t" style="left:905.5px;width:400px;text-align:center;top:573.37px;font-family:'Liberation Serif';font-size:15.3px;font-weight:bold;font-style:normal;color:#000;"><i>(M)</i></div><div class="t" style="left:1139.5px;width:400px;text-align:center;top:513.87px;font-family:'Liberation Serif';font-size:15.3px;font-weight:bold;font-style:normal;color:#000;">Мінімальне податкове зобов’язання (МПЗ) не</div><div class="t" style="left:1139.5px;width:400px;text-align:center;top:533.47px;font-family:'Liberation Serif';font-size:15.3px;font-weight:bold;font-style:normal;color:#000;">менше 700 грн з 1 га або 1400 грн з 1 га, якщо</div><div class="t" style="left:1139.5px;width:400px;text-align:center;top:553.07px;font-family:'Liberation Serif';font-size:15.3px;font-weight:bold;font-style:normal;color:#000;">частка ріллі не менше 50 % <sup style="font-size:12px;font-weight:bold;vertical-align:4px">14</sup> :</div><div class="t" style="left:1047.0px;width:400px;text-align:center;top:574.37px;font-family:'Liberation Serif';font-size:15.3px;font-weight:bold;font-style:normal;color:#000;">земельної ділянки,</div><div class="t" style="left:1047.0px;width:400px;text-align:center;top:594.37px;font-family:'Liberation Serif';font-size:15.3px;font-weight:bold;font-style:normal;color:#000;">нормативна грошова</div><div class="t" style="left:1047.0px;width:400px;text-align:center;top:614.37px;font-family:'Liberation Serif';font-size:15.3px;font-weight:bold;font-style:normal;color:#000;">оцінка якої проведена</div><div class="t" style="left:1047.0px;width:400px;text-align:center;top:634.37px;font-family:'Liberation Serif';font-size:15.3px;font-weight:bold;font-style:normal;color:#000;">МПЗ = НГОд  х К х М / 12</div><div class="t" style="left:1047.0px;width:400px;text-align:center;top:654.37px;font-family:'Liberation Serif';font-size:15.3px;font-weight:bold;font-style:normal;color:#000;">(графа 7 х графа 9 х</div><div class="t" style="left:1047.0px;width:400px;text-align:center;top:674.37px;font-family:'Liberation Serif';font-size:15.3px;font-weight:bold;font-style:normal;color:#000;">графа 10 /12),</div><div class="t" style="left:1047.0px;width:400px;text-align:center;top:694.37px;font-family:'Liberation Serif';font-size:15.3px;font-weight:bold;font-style:normal;color:#000;">(грн)</div><div class="t" style="left:1232.0px;width:400px;text-align:center;top:574.37px;font-family:'Liberation Serif';font-size:15.3px;font-weight:bold;font-style:normal;color:#000;">земельної ділянки,</div><div class="t" style="left:1232.0px;width:400px;text-align:center;top:594.37px;font-family:'Liberation Serif';font-size:15.3px;font-weight:bold;font-style:normal;color:#000;">нормативна грошова</div><div class="t" style="left:1232.0px;width:400px;text-align:center;top:614.37px;font-family:'Liberation Serif';font-size:15.3px;font-weight:bold;font-style:normal;color:#000;">оцінка якої не проведена</div><div class="t" style="left:1232.0px;width:400px;text-align:center;top:634.37px;font-family:'Liberation Serif';font-size:15.3px;font-weight:bold;font-style:normal;color:#000;">МПЗ = НГО х S х К х М</div><div class="t" style="left:1232.0px;width:400px;text-align:center;top:654.37px;font-family:'Liberation Serif';font-size:15.3px;font-weight:bold;font-style:normal;color:#000;">/ 12  (графа 8  х графа 3</div><div class="t" style="left:1232.0px;width:400px;text-align:center;top:674.37px;font-family:'Liberation Serif';font-size:15.3px;font-weight:bold;font-style:normal;color:#000;">або 5 х  графа 9 х</div><div class="t" style="left:1232.0px;width:400px;text-align:center;top:694.37px;font-family:'Liberation Serif';font-size:15.3px;font-weight:bold;font-style:normal;color:#000;">графа 10 / 12),</div><div class="t" style="left:1232.0px;width:400px;text-align:center;top:714.37px;font-family:'Liberation Serif';font-size:15.3px;font-weight:bold;font-style:normal;color:#000;">(грн)</div><div class="t" style="left:1406.5px;width:400px;text-align:center;top:553.37px;font-family:'Liberation Serif';font-size:15.3px;font-weight:bold;font-style:normal;color:#000;">Загальне мінімальне</div><div class="t" style="left:1406.5px;width:400px;text-align:center;top:573.37px;font-family:'Liberation Serif';font-size:15.3px;font-weight:bold;font-style:normal;color:#000;">податкове</div><div class="t" style="left:1406.5px;width:400px;text-align:center;top:593.37px;font-family:'Liberation Serif';font-size:15.3px;font-weight:bold;font-style:normal;color:#000;">зобов’язання (ЗМПЗ)</div><div class="t" style="left:1406.5px;width:400px;text-align:center;top:613.37px;font-family:'Liberation Serif';font-size:15.3px;font-weight:bold;font-style:normal;color:#000;">(ЗМПЗ = сума</div><div class="t" style="left:1406.5px;width:400px;text-align:center;top:633.37px;font-family:'Liberation Serif';font-size:15.3px;font-weight:bold;font-style:normal;color:#000;">граф 11 та 12</div><div class="t" style="left:1406.5px;width:400px;text-align:center;top:653.37px;font-family:'Liberation Serif';font-size:15.3px;font-weight:bold;font-style:normal;color:#000;">рядка 2),</div><div class="t" style="left:1406.5px;width:400px;text-align:center;top:673.37px;font-family:'Liberation Serif';font-size:15.3px;font-weight:bold;font-style:normal;color:#000;">(грн)</div><div class="t" style="left:1557.0px;width:400px;text-align:center;top:574.37px;font-family:'Liberation Serif';font-size:15.3px;font-weight:bold;font-style:normal;color:#000;">20 % витрат на</div><div class="t" style="left:1557.0px;width:400px;text-align:center;top:594.37px;font-family:'Liberation Serif';font-size:15.3px;font-weight:bold;font-style:normal;color:#000;">сплату орендної</div><div class="t" style="left:1557.0px;width:400px;text-align:center;top:614.37px;font-family:'Liberation Serif';font-size:15.3px;font-weight:bold;font-style:normal;color:#000;">плати земельних</div><div class="t" style="left:1557.0px;width:400px;text-align:center;top:634.37px;font-family:'Liberation Serif';font-size:15.3px;font-weight:bold;font-style:normal;color:#000;">ділянок <sup style="font-size:12px;font-weight:bold;vertical-align:5px">5</sup> ,</div><div class="t" style="left:1557.0px;width:400px;text-align:center;top:654.37px;font-family:'Liberation Serif';font-size:15.3px;font-weight:bold;font-style:normal;color:#000;">(грн)</div><div class="t" style="left:65.95px;width:120px;text-align:center;top:737.38px;font-family:'Liberation Sans';font-size:14.5px;font-weight:normal;font-style:normal;color:#222;letter-spacing:0.9px;">1</div><div class="t" style="left:200.45px;width:120px;text-align:center;top:737.38px;font-family:'Liberation Sans';font-size:14.5px;font-weight:normal;font-style:normal;color:#222;letter-spacing:0.9px;">2</div><div class="t" style="left:337.95px;width:120px;text-align:center;top:737.38px;font-family:'Liberation Sans';font-size:14.5px;font-weight:normal;font-style:normal;color:#222;letter-spacing:0.9px;">3</div><div class="t" style="left:405.95px;width:120px;text-align:center;top:737.38px;font-family:'Liberation Sans';font-size:14.5px;font-weight:normal;font-style:normal;color:#222;letter-spacing:0.9px;">4</div><div class="t" style="left:477.45000000000005px;width:120px;text-align:center;top:737.38px;font-family:'Liberation Sans';font-size:14.5px;font-weight:normal;font-style:normal;color:#222;letter-spacing:0.9px;">5</div><div class="t" style="left:545.45px;width:120px;text-align:center;top:737.38px;font-family:'Liberation Sans';font-size:14.5px;font-weight:normal;font-style:normal;color:#222;letter-spacing:0.9px;">6</div><div class="t" style="left:652.95px;width:120px;text-align:center;top:737.38px;font-family:'Liberation Sans';font-size:14.5px;font-weight:normal;font-style:normal;color:#222;letter-spacing:0.9px;">7</div><div class="t" style="left:811.45px;width:120px;text-align:center;top:737.38px;font-family:'Liberation Sans';font-size:14.5px;font-weight:normal;font-style:normal;color:#222;letter-spacing:0.9px;">8</div><div class="t" style="left:942.95px;width:120px;text-align:center;top:737.38px;font-family:'Liberation Sans';font-size:14.5px;font-weight:normal;font-style:normal;color:#222;letter-spacing:0.9px;">9</div><div class="t" style="left:1045.95px;width:120px;text-align:center;top:737.38px;font-family:'Liberation Sans';font-size:14.5px;font-weight:normal;font-style:normal;color:#222;letter-spacing:0.9px;">10</div><div class="t" style="left:1187.45px;width:120px;text-align:center;top:737.38px;font-family:'Liberation Sans';font-size:14.5px;font-weight:normal;font-style:normal;color:#222;letter-spacing:0.9px;">11</div><div class="t" style="left:1371.95px;width:120px;text-align:center;top:737.38px;font-family:'Liberation Sans';font-size:14.5px;font-weight:normal;font-style:normal;color:#222;letter-spacing:0.9px;">12</div><div class="t" style="left:1546.95px;width:120px;text-align:center;top:737.38px;font-family:'Liberation Sans';font-size:14.5px;font-weight:normal;font-style:normal;color:#222;letter-spacing:0.9px;">13</div><div class="t" style="left:1697.45px;width:120px;text-align:center;top:737.38px;font-family:'Liberation Sans';font-size:14.5px;font-weight:normal;font-style:normal;color:#222;letter-spacing:0.9px;">14</div><div class="r" style="left:147px;top:758px;width:13px;height:20px;background:#fff;"></div><div class="t" style="left:93.80000000000001px;width:50px;text-align:right;top:758.08px;font-family:'Liberation Sans';font-size:13.5px;font-weight:normal;font-style:normal;color:#222;">1.1</div><div class="t" style="left:149px;top:758.19px;font-family:'Liberation Sans';font-size:12.5px;font-weight:normal;font-style:normal;color:#222;">6</div><div class="t" style="left:160.45px;width:200px;text-align:center;top:759.38px;font-family:'Liberation Sans';font-size:14.5px;font-weight:normal;font-style:normal;color:#222;letter-spacing:0.9px;">5621280400:04:011:0567</div><div class="t" style="left:297.95px;width:200px;text-align:center;top:759.38px;font-family:'Liberation Sans';font-size:14.5px;font-weight:normal;font-style:normal;color:#222;letter-spacing:0.9px;">-</div><div class="t" style="left:365.95px;width:200px;text-align:center;top:759.38px;font-family:'Liberation Sans';font-size:14.5px;font-weight:normal;font-style:normal;color:#222;letter-spacing:0.9px;">-</div><div class="t" style="left:437.45000000000005px;width:200px;text-align:center;top:759.38px;font-family:'Liberation Sans';font-size:14.5px;font-weight:normal;font-style:normal;color:#222;letter-spacing:0.9px;">2,0696</div><div class="t" style="left:505.45000000000005px;width:200px;text-align:center;top:759.38px;font-family:'Liberation Sans';font-size:14.5px;font-weight:normal;font-style:normal;color:#222;letter-spacing:0.9px;">50,00</div><div class="t" style="left:612.95px;width:200px;text-align:center;top:759.38px;font-family:'Liberation Sans';font-size:14.5px;font-weight:normal;font-style:normal;color:#222;letter-spacing:0.9px;">57 906,52</div><div class="t" style="left:771.45px;width:200px;text-align:center;top:759.38px;font-family:'Liberation Sans';font-size:14.5px;font-weight:normal;font-style:normal;color:#222;letter-spacing:0.9px;">-</div><div class="t" style="left:902.95px;width:200px;text-align:center;top:759.38px;font-family:'Liberation Sans';font-size:14.5px;font-weight:normal;font-style:normal;color:#222;letter-spacing:0.9px;">0,05</div><div class="t" style="left:1005.95px;width:200px;text-align:center;top:759.38px;font-family:'Liberation Sans';font-size:14.5px;font-weight:normal;font-style:normal;color:#222;letter-spacing:0.9px;">12</div><div class="t" style="left:1147.45px;width:200px;text-align:center;top:759.38px;font-family:'Liberation Sans';font-size:14.5px;font-weight:normal;font-style:normal;color:#222;letter-spacing:0.9px;">2 897,44</div><div class="t" style="left:1331.95px;width:200px;text-align:center;top:759.38px;font-family:'Liberation Sans';font-size:14.5px;font-weight:normal;font-style:normal;color:#222;letter-spacing:0.9px;">-</div><div class="t" style="left:1556.5px;width:100px;text-align:center;top:757.35px;font-family:'Liberation Serif';font-size:17px;font-weight:normal;font-style:normal;color:#000;">X</div><div class="t" style="left:1657.45px;width:200px;text-align:center;top:759.38px;font-family:'Liberation Sans';font-size:14.5px;font-weight:normal;font-style:normal;color:#222;letter-spacing:0.9px;">-</div><div class="r" style="left:147px;top:779px;width:13px;height:21px;background:#fff;"></div><div class="t" style="left:93.80000000000001px;width:50px;text-align:right;top:779.08px;font-family:'Liberation Sans';font-size:13.5px;font-weight:normal;font-style:normal;color:#222;">1.2</div><div class="t" style="left:149px;top:779.19px;font-family:'Liberation Sans';font-size:12.5px;font-weight:normal;font-style:normal;color:#222;">6</div><div class="t" style="left:160.45px;width:200px;text-align:center;top:780.38px;font-family:'Liberation Sans';font-size:14.5px;font-weight:normal;font-style:normal;color:#222;letter-spacing:0.9px;">5621280400:03:001:0102</div><div class="t" style="left:297.95px;width:200px;text-align:center;top:780.38px;font-family:'Liberation Sans';font-size:14.5px;font-weight:normal;font-style:normal;color:#222;letter-spacing:0.9px;">3,9613</div><div class="t" style="left:365.95px;width:200px;text-align:center;top:780.38px;font-family:'Liberation Sans';font-size:14.5px;font-weight:normal;font-style:normal;color:#222;letter-spacing:0.9px;">20,00</div><div class="t" style="left:437.45000000000005px;width:200px;text-align:center;top:780.38px;font-family:'Liberation Sans';font-size:14.5px;font-weight:normal;font-style:normal;color:#222;letter-spacing:0.9px;">-</div><div class="t" style="left:505.45000000000005px;width:200px;text-align:center;top:780.38px;font-family:'Liberation Sans';font-size:14.5px;font-weight:normal;font-style:normal;color:#222;letter-spacing:0.9px;">-</div><div class="t" style="left:612.95px;width:200px;text-align:center;top:780.38px;font-family:'Liberation Sans';font-size:14.5px;font-weight:normal;font-style:normal;color:#222;letter-spacing:0.9px;">-</div><div class="t" style="left:771.45px;width:200px;text-align:center;top:780.38px;font-family:'Liberation Sans';font-size:14.5px;font-weight:normal;font-style:normal;color:#222;letter-spacing:0.9px;">60 288,67</div><div class="t" style="left:902.95px;width:200px;text-align:center;top:780.38px;font-family:'Liberation Sans';font-size:14.5px;font-weight:normal;font-style:normal;color:#222;letter-spacing:0.9px;">0,05</div><div class="t" style="left:1005.95px;width:200px;text-align:center;top:780.38px;font-family:'Liberation Sans';font-size:14.5px;font-weight:normal;font-style:normal;color:#222;letter-spacing:0.9px;">12</div><div class="t" style="left:1147.45px;width:200px;text-align:center;top:780.38px;font-family:'Liberation Sans';font-size:14.5px;font-weight:normal;font-style:normal;color:#222;letter-spacing:0.9px;">-</div><div class="t" style="left:1331.95px;width:200px;text-align:center;top:780.38px;font-family:'Liberation Sans';font-size:14.5px;font-weight:normal;font-style:normal;color:#222;letter-spacing:0.9px;">11 941,08</div><div class="t" style="left:1556.5px;width:100px;text-align:center;top:778.35px;font-family:'Liberation Serif';font-size:17px;font-weight:normal;font-style:normal;color:#000;">X</div><div class="t" style="left:1657.45px;width:200px;text-align:center;top:780.38px;font-family:'Liberation Sans';font-size:14.5px;font-weight:normal;font-style:normal;color:#222;letter-spacing:0.9px;">-</div><div class="r" style="left:147px;top:801px;width:13px;height:21px;background:#fff;"></div><div class="t" style="left:93.80000000000001px;width:50px;text-align:right;top:801.08px;font-family:'Liberation Sans';font-size:13.5px;font-weight:normal;font-style:normal;color:#222;">1.3</div><div class="t" style="left:149px;top:801.19px;font-family:'Liberation Sans';font-size:12.5px;font-weight:normal;font-style:normal;color:#222;">6</div><div class="t" style="left:160.45px;width:200px;text-align:center;top:802.38px;font-family:'Liberation Sans';font-size:14.5px;font-weight:normal;font-style:normal;color:#222;letter-spacing:0.9px;">5621280400:04:011:0053</div><div class="t" style="left:297.95px;width:200px;text-align:center;top:802.38px;font-family:'Liberation Sans';font-size:14.5px;font-weight:normal;font-style:normal;color:#222;letter-spacing:0.9px;">-</div><div class="t" style="left:365.95px;width:200px;text-align:center;top:802.38px;font-family:'Liberation Sans';font-size:14.5px;font-weight:normal;font-style:normal;color:#222;letter-spacing:0.9px;">-</div><div class="t" style="left:437.45000000000005px;width:200px;text-align:center;top:802.38px;font-family:'Liberation Sans';font-size:14.5px;font-weight:normal;font-style:normal;color:#222;letter-spacing:0.9px;">2,8014</div><div class="t" style="left:505.45000000000005px;width:200px;text-align:center;top:802.38px;font-family:'Liberation Sans';font-size:14.5px;font-weight:normal;font-style:normal;color:#222;letter-spacing:0.9px;">50,00</div><div class="t" style="left:612.95px;width:200px;text-align:center;top:802.38px;font-family:'Liberation Sans';font-size:14.5px;font-weight:normal;font-style:normal;color:#222;letter-spacing:0.9px;">73 324,03</div><div class="t" style="left:771.45px;width:200px;text-align:center;top:802.38px;font-family:'Liberation Sans';font-size:14.5px;font-weight:normal;font-style:normal;color:#222;letter-spacing:0.9px;">-</div><div class="t" style="left:902.95px;width:200px;text-align:center;top:802.38px;font-family:'Liberation Sans';font-size:14.5px;font-weight:normal;font-style:normal;color:#222;letter-spacing:0.9px;">0,05</div><div class="t" style="left:1005.95px;width:200px;text-align:center;top:802.38px;font-family:'Liberation Sans';font-size:14.5px;font-weight:normal;font-style:normal;color:#222;letter-spacing:0.9px;">12</div><div class="t" style="left:1147.45px;width:200px;text-align:center;top:802.38px;font-family:'Liberation Sans';font-size:14.5px;font-weight:normal;font-style:normal;color:#222;letter-spacing:0.9px;">3 921,96</div><div class="t" style="left:1331.95px;width:200px;text-align:center;top:802.38px;font-family:'Liberation Sans';font-size:14.5px;font-weight:normal;font-style:normal;color:#222;letter-spacing:0.9px;">-</div><div class="t" style="left:1556.5px;width:100px;text-align:center;top:800.35px;font-family:'Liberation Serif';font-size:17px;font-weight:normal;font-style:normal;color:#000;">X</div><div class="t" style="left:1657.45px;width:200px;text-align:center;top:802.38px;font-family:'Liberation Sans';font-size:14.5px;font-weight:normal;font-style:normal;color:#222;letter-spacing:0.9px;">-</div><div class="r" style="left:147px;top:823px;width:13px;height:20px;background:#fff;"></div><div class="t" style="left:93.80000000000001px;width:50px;text-align:right;top:823.08px;font-family:'Liberation Sans';font-size:13.5px;font-weight:normal;font-style:normal;color:#222;">1.4</div><div class="t" style="left:149px;top:823.19px;font-family:'Liberation Sans';font-size:12.5px;font-weight:normal;font-style:normal;color:#222;">6</div><div class="t" style="left:160.45px;width:200px;text-align:center;top:824.38px;font-family:'Liberation Sans';font-size:14.5px;font-weight:normal;font-style:normal;color:#222;letter-spacing:0.9px;">5621280400:03:001:0091</div><div class="t" style="left:297.95px;width:200px;text-align:center;top:824.38px;font-family:'Liberation Sans';font-size:14.5px;font-weight:normal;font-style:normal;color:#222;letter-spacing:0.9px;">4,5495</div><div class="t" style="left:365.95px;width:200px;text-align:center;top:824.38px;font-family:'Liberation Sans';font-size:14.5px;font-weight:normal;font-style:normal;color:#222;letter-spacing:0.9px;">20,00</div><div class="t" style="left:437.45000000000005px;width:200px;text-align:center;top:824.38px;font-family:'Liberation Sans';font-size:14.5px;font-weight:normal;font-style:normal;color:#222;letter-spacing:0.9px;">-</div><div class="t" style="left:505.45000000000005px;width:200px;text-align:center;top:824.38px;font-family:'Liberation Sans';font-size:14.5px;font-weight:normal;font-style:normal;color:#222;letter-spacing:0.9px;">-</div><div class="t" style="left:612.95px;width:200px;text-align:center;top:824.38px;font-family:'Liberation Sans';font-size:14.5px;font-weight:normal;font-style:normal;color:#222;letter-spacing:0.9px;">-</div><div class="t" style="left:771.45px;width:200px;text-align:center;top:824.38px;font-family:'Liberation Sans';font-size:14.5px;font-weight:normal;font-style:normal;color:#222;letter-spacing:0.9px;">72 307,80</div><div class="t" style="left:902.95px;width:200px;text-align:center;top:824.38px;font-family:'Liberation Sans';font-size:14.5px;font-weight:normal;font-style:normal;color:#222;letter-spacing:0.9px;">0,05</div><div class="t" style="left:1005.95px;width:200px;text-align:center;top:824.38px;font-family:'Liberation Sans';font-size:14.5px;font-weight:normal;font-style:normal;color:#222;letter-spacing:0.9px;">12</div><div class="t" style="left:1147.45px;width:200px;text-align:center;top:824.38px;font-family:'Liberation Sans';font-size:14.5px;font-weight:normal;font-style:normal;color:#222;letter-spacing:0.9px;">-</div><div class="t" style="left:1331.95px;width:200px;text-align:center;top:824.38px;font-family:'Liberation Sans';font-size:14.5px;font-weight:normal;font-style:normal;color:#222;letter-spacing:0.9px;">16 448,22</div><div class="t" style="left:1556.5px;width:100px;text-align:center;top:822.35px;font-family:'Liberation Serif';font-size:17px;font-weight:normal;font-style:normal;color:#000;">X</div><div class="t" style="left:1657.45px;width:200px;text-align:center;top:824.38px;font-family:'Liberation Sans';font-size:14.5px;font-weight:normal;font-style:normal;color:#222;letter-spacing:0.9px;">-</div><div class="r" style="left:147px;top:844px;width:13px;height:21px;background:#fff;"></div><div class="t" style="left:93.80000000000001px;width:50px;text-align:right;top:844.08px;font-family:'Liberation Sans';font-size:13.5px;font-weight:normal;font-style:normal;color:#222;">1.5</div><div class="t" style="left:149px;top:844.19px;font-family:'Liberation Sans';font-size:12.5px;font-weight:normal;font-style:normal;color:#222;">6</div><div class="t" style="left:160.45px;width:200px;text-align:center;top:845.38px;font-family:'Liberation Sans';font-size:14.5px;font-weight:normal;font-style:normal;color:#222;letter-spacing:0.9px;">5621280400:04:008:0007</div><div class="t" style="left:297.95px;width:200px;text-align:center;top:845.38px;font-family:'Liberation Sans';font-size:14.5px;font-weight:normal;font-style:normal;color:#222;letter-spacing:0.9px;">-</div><div class="t" style="left:365.95px;width:200px;text-align:center;top:845.38px;font-family:'Liberation Sans';font-size:14.5px;font-weight:normal;font-style:normal;color:#222;letter-spacing:0.9px;">-</div><div class="t" style="left:437.45000000000005px;width:200px;text-align:center;top:845.38px;font-family:'Liberation Sans';font-size:14.5px;font-weight:normal;font-style:normal;color:#222;letter-spacing:0.9px;">7,2043</div><div class="t" style="left:505.45000000000005px;width:200px;text-align:center;top:845.38px;font-family:'Liberation Sans';font-size:14.5px;font-weight:normal;font-style:normal;color:#222;letter-spacing:0.9px;">50,00</div><div class="t" style="left:612.95px;width:200px;text-align:center;top:845.38px;font-family:'Liberation Sans';font-size:14.5px;font-weight:normal;font-style:normal;color:#222;letter-spacing:0.9px;">172 165,04</div><div class="t" style="left:771.45px;width:200px;text-align:center;top:845.38px;font-family:'Liberation Sans';font-size:14.5px;font-weight:normal;font-style:normal;color:#222;letter-spacing:0.9px;">-</div><div class="t" style="left:902.95px;width:200px;text-align:center;top:845.38px;font-family:'Liberation Sans';font-size:14.5px;font-weight:normal;font-style:normal;color:#222;letter-spacing:0.9px;">0,05</div><div class="t" style="left:1005.95px;width:200px;text-align:center;top:845.38px;font-family:'Liberation Sans';font-size:14.5px;font-weight:normal;font-style:normal;color:#222;letter-spacing:0.9px;">12</div><div class="t" style="left:1147.45px;width:200px;text-align:center;top:845.38px;font-family:'Liberation Sans';font-size:14.5px;font-weight:normal;font-style:normal;color:#222;letter-spacing:0.9px;">10 086,02</div><div class="t" style="left:1331.95px;width:200px;text-align:center;top:845.38px;font-family:'Liberation Sans';font-size:14.5px;font-weight:normal;font-style:normal;color:#222;letter-spacing:0.9px;">-</div><div class="t" style="left:1556.5px;width:100px;text-align:center;top:843.35px;font-family:'Liberation Serif';font-size:17px;font-weight:normal;font-style:normal;color:#000;">X</div><div class="t" style="left:1657.45px;width:200px;text-align:center;top:845.38px;font-family:'Liberation Sans';font-size:14.5px;font-weight:normal;font-style:normal;color:#222;letter-spacing:0.9px;">-</div><div class="r" style="left:147px;top:866px;width:13px;height:21px;background:#fff;"></div><div class="t" style="left:93.80000000000001px;width:50px;text-align:right;top:866.08px;font-family:'Liberation Sans';font-size:13.5px;font-weight:normal;font-style:normal;color:#222;">1.6</div><div class="t" style="left:149px;top:866.19px;font-family:'Liberation Sans';font-size:12.5px;font-weight:normal;font-style:normal;color:#222;">6</div><div class="t" style="left:160.45px;width:200px;text-align:center;top:867.38px;font-family:'Liberation Sans';font-size:14.5px;font-weight:normal;font-style:normal;color:#222;letter-spacing:0.9px;">5621280400:04:011:0525</div><div class="t" style="left:297.95px;width:200px;text-align:center;top:867.38px;font-family:'Liberation Sans';font-size:14.5px;font-weight:normal;font-style:normal;color:#222;letter-spacing:0.9px;">3,5098</div><div class="t" style="left:365.95px;width:200px;text-align:center;top:867.38px;font-family:'Liberation Sans';font-size:14.5px;font-weight:normal;font-style:normal;color:#222;letter-spacing:0.9px;">20,00</div><div class="t" style="left:437.45000000000005px;width:200px;text-align:center;top:867.38px;font-family:'Liberation Sans';font-size:14.5px;font-weight:normal;font-style:normal;color:#222;letter-spacing:0.9px;">-</div><div class="t" style="left:505.45000000000005px;width:200px;text-align:center;top:867.38px;font-family:'Liberation Sans';font-size:14.5px;font-weight:normal;font-style:normal;color:#222;letter-spacing:0.9px;">-</div><div class="t" style="left:612.95px;width:200px;text-align:center;top:867.38px;font-family:'Liberation Sans';font-size:14.5px;font-weight:normal;font-style:normal;color:#222;letter-spacing:0.9px;">103 318,21</div><div class="t" style="left:771.45px;width:200px;text-align:center;top:867.38px;font-family:'Liberation Sans';font-size:14.5px;font-weight:normal;font-style:normal;color:#222;letter-spacing:0.9px;">-</div><div class="t" style="left:902.95px;width:200px;text-align:center;top:867.38px;font-family:'Liberation Sans';font-size:14.5px;font-weight:normal;font-style:normal;color:#222;letter-spacing:0.9px;">0,05</div><div class="t" style="left:1005.95px;width:200px;text-align:center;top:867.38px;font-family:'Liberation Sans';font-size:14.5px;font-weight:normal;font-style:normal;color:#222;letter-spacing:0.9px;">12</div><div class="t" style="left:1147.45px;width:200px;text-align:center;top:867.38px;font-family:'Liberation Sans';font-size:14.5px;font-weight:normal;font-style:normal;color:#222;letter-spacing:0.9px;">5 165,91</div><div class="t" style="left:1331.95px;width:200px;text-align:center;top:867.38px;font-family:'Liberation Sans';font-size:14.5px;font-weight:normal;font-style:normal;color:#222;letter-spacing:0.9px;">-</div><div class="t" style="left:1556.5px;width:100px;text-align:center;top:865.35px;font-family:'Liberation Serif';font-size:17px;font-weight:normal;font-style:normal;color:#000;">X</div><div class="t" style="left:1657.45px;width:200px;text-align:center;top:867.38px;font-family:'Liberation Sans';font-size:14.5px;font-weight:normal;font-style:normal;color:#222;letter-spacing:0.9px;">-</div><div class="r" style="left:147px;top:888px;width:13px;height:20px;background:#fff;"></div><div class="t" style="left:93.80000000000001px;width:50px;text-align:right;top:888.08px;font-family:'Liberation Sans';font-size:13.5px;font-weight:normal;font-style:normal;color:#222;">1.7</div><div class="t" style="left:149px;top:888.19px;font-family:'Liberation Sans';font-size:12.5px;font-weight:normal;font-style:normal;color:#222;">6</div><div class="t" style="left:160.45px;width:200px;text-align:center;top:889.38px;font-family:'Liberation Sans';font-size:14.5px;font-weight:normal;font-style:normal;color:#222;letter-spacing:0.9px;">5621280400:04:011:0116</div><div class="t" style="left:297.95px;width:200px;text-align:center;top:889.38px;font-family:'Liberation Sans';font-size:14.5px;font-weight:normal;font-style:normal;color:#222;letter-spacing:0.9px;">-</div><div class="t" style="left:365.95px;width:200px;text-align:center;top:889.38px;font-family:'Liberation Sans';font-size:14.5px;font-weight:normal;font-style:normal;color:#222;letter-spacing:0.9px;">-</div><div class="t" style="left:437.45000000000005px;width:200px;text-align:center;top:889.38px;font-family:'Liberation Sans';font-size:14.5px;font-weight:normal;font-style:normal;color:#222;letter-spacing:0.9px;">2,7731</div><div class="t" style="left:505.45000000000005px;width:200px;text-align:center;top:889.38px;font-family:'Liberation Sans';font-size:14.5px;font-weight:normal;font-style:normal;color:#222;letter-spacing:0.9px;">50,00</div><div class="t" style="left:612.95px;width:200px;text-align:center;top:889.38px;font-family:'Liberation Sans';font-size:14.5px;font-weight:normal;font-style:normal;color:#222;letter-spacing:0.9px;">69 572,83</div><div class="t" style="left:771.45px;width:200px;text-align:center;top:889.38px;font-family:'Liberation Sans';font-size:14.5px;font-weight:normal;font-style:normal;color:#222;letter-spacing:0.9px;">-</div><div class="t" style="left:902.95px;width:200px;text-align:center;top:889.38px;font-family:'Liberation Sans';font-size:14.5px;font-weight:normal;font-style:normal;color:#222;letter-spacing:0.9px;">0,05</div><div class="t" style="left:1005.95px;width:200px;text-align:center;top:889.38px;font-family:'Liberation Sans';font-size:14.5px;font-weight:normal;font-style:normal;color:#222;letter-spacing:0.9px;">12</div><div class="t" style="left:1147.45px;width:200px;text-align:center;top:889.38px;font-family:'Liberation Sans';font-size:14.5px;font-weight:normal;font-style:normal;color:#222;letter-spacing:0.9px;">3 882,34</div><div class="t" style="left:1331.95px;width:200px;text-align:center;top:889.38px;font-family:'Liberation Sans';font-size:14.5px;font-weight:normal;font-style:normal;color:#222;letter-spacing:0.9px;">-</div><div class="t" style="left:1556.5px;width:100px;text-align:center;top:887.35px;font-family:'Liberation Serif';font-size:17px;font-weight:normal;font-style:normal;color:#000;">X</div><div class="t" style="left:1657.45px;width:200px;text-align:center;top:889.38px;font-family:'Liberation Sans';font-size:14.5px;font-weight:normal;font-style:normal;color:#222;letter-spacing:0.9px;">-</div><div class="r" style="left:1154px;top:512px;width:372px;height:397px;border:3px solid #ee0000;box-sizing:border-box;"></div><div class="r" style="left:1173px;top:110px;width:105px;height:23px;background:#fff;border:1px solid #7a7a7a;border-bottom:none;box-sizing:border-box;"></div><svg style="left:1177px;top:112px" width="22" height="20" viewBox="0 0 22 20"><path d="M1 3 H9 M1 6 H9 M1 9 H9 M1 12 H9 M1 15 H9 M1 18 H9" stroke="#9a9aa8" stroke-width="1.6"/><path d="M11 2 L17 2 L14 8 L18 8 L10 19 L12 11 L8 11 Z" fill="#e83030" stroke="#a01010" stroke-width="0.6"/></svg><div class="t" style="left:1200px;top:113.37px;font-family:'Liberation Sans';font-size:13.4px;font-weight:normal;font-style:normal;color:#000;">Програми</div><svg style="left:1270px;top:119px" width="6" height="4"><path d="M0 0 H6 L3 3 Z" fill="#000"/></svg><div class="r" style="left:1558px;top:133px;width:4px;height:123px;background:linear-gradient(90deg, rgba(0,0,0,0.28), rgba(0,0,0,0));"></div><div class="r" style="left:1176px;top:255px;width:384px;height:3px;background:linear-gradient(180deg, rgba(0,0,0,0.22), rgba(0,0,0,0));"></div><div class="r" style="left:1277px;top:112px;width:4px;height:20px;background:linear-gradient(90deg, rgba(0,0,0,0.25), rgba(0,0,0,0));"></div><div class="r" style="left:1173px;top:131px;width:385px;height:124px;background:#fff;border:1px solid #7a7a7a;border-top:none;box-sizing:border-box;"></div><div class="r" style="left:1277px;top:131px;width:281px;height:1px;background:#7a7a7a;"></div><div class="r" style="left:1175px;top:205px;width:381px;height:24px;background:#b6d6f2;border:1px solid #2d6aa8;box-sizing:border-box;"></div><div class="t" style="left:1206px;top:137.69px;font-family:'Liberation Sans';font-size:13.6px;font-weight:normal;font-style:normal;color:#111;">Перенесення даних з J0138305</div><div class="t" style="left:1206px;top:161.69px;font-family:'Liberation Sans';font-size:13.6px;font-weight:normal;font-style:normal;color:#111;">Перенесення даних з J0138106</div><div class="t" style="left:1206px;top:185.69px;font-family:'Liberation Sans';font-size:13.6px;font-weight:normal;font-style:normal;color:#111;">Коефіцієнт та місяці</div><div class="t" style="left:1206px;top:209.69px;font-family:'Liberation Sans';font-size:13.6px;font-weight:normal;font-style:normal;color:#111;">Перерахунок з урах. мінімал. допустимої суми МПЗ</div><div class="t" style="left:1206px;top:233.69px;font-family:'Liberation Sans';font-size:13.6px;font-weight:normal;font-style:normal;color:#111;">Частка ріллі</div><div class="r" style="left:0px;top:0px;width:1880px;height:2px;background:#a6a6a6;"></div><div class="r" style="left:0px;top:0px;width:2px;height:932px;background:#a6a6a6;"></div><div class="r" style="left:1878px;top:0px;width:2px;height:932px;background:#a6a6a6;"></div><div class="r" style="left:0px;top:930px;width:1880px;height:2px;background:#a6a6a6;"></div></body></html>
